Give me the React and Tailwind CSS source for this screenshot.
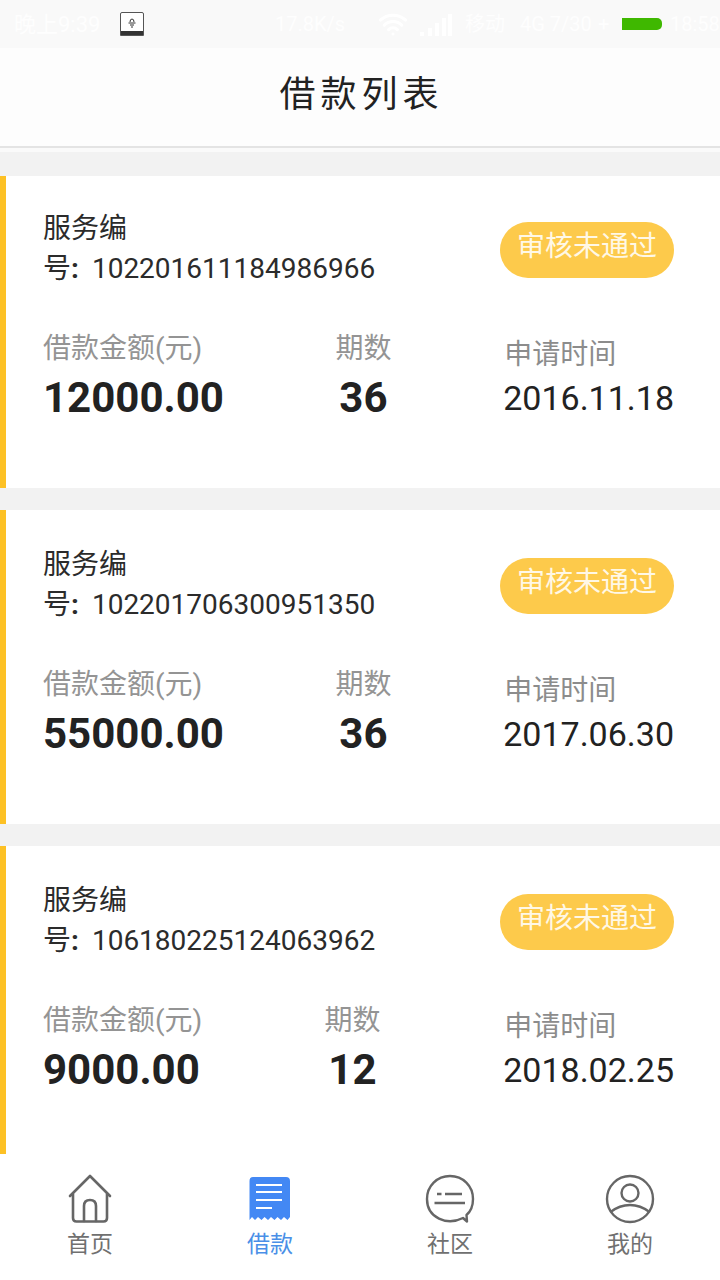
import React from 'react'
import { Wifi } from 'lucide-react'

const font = "font-['Roboto','Noto_Sans_CJK_SC',sans-serif]"

const loans = [
  { no: '102201611184986966', amount: '12000.00', term: '36', date: '2016.11.18', card: 'h-[312px] pt-[33px]', termLeft: 'ml-[41px]' },
  { no: '102201706300951350', amount: '55000.00', term: '36', date: '2017.06.30', card: 'h-[314px] pt-[35px]', termLeft: 'ml-[41px]' },
  { no: '106180225124063962', amount: '9000.00', term: '12', date: '2018.02.25', card: 'h-[308px] pt-[35px]', termLeft: 'ml-[30px]' },
]

const LoanCard = ({ loan }) => (
  <div className={`${loan.card} bg-white border-l-[6px] border-[#fdc125] pl-[37px] pr-[46px]`}>
    <div className='flex justify-between items-start'>
      <div className='text-[28px] leading-[40px] text-[#2b2b2b] w-[340px]'>
        <div>服务编</div>
        <div>号<span className='font-bold'>:</span><span className='ml-[13px]'>{loan.no}</span></div>
      </div>
      <div className='mt-[13px] w-[174px] h-[56px] rounded-full bg-[#fdca4b] text-[#fff8e6] text-[28px] leading-[49px] text-center'>审核未通过</div>
    </div>
    <div className='flex mt-[40px]'>
      <div className='w-[254px]'>
        <div className='text-[28px] leading-[40px] text-[#949494]'>借款金额(元)</div>
        <div className='text-[42px] leading-[58px] font-bold text-[#222222]'>{loan.amount}</div>
      </div>
      <div className='w-[207px] flex'>
        <div className={`${loan.termLeft} w-[54px] flex flex-col items-center`}>
          <div className='text-[28px] leading-[40px] text-[#949494] whitespace-nowrap'>期数</div>
          <div className='text-[42px] leading-[58px] font-bold text-[#222222]'>{loan.term}</div>
        </div>
      </div>
      <div className='ml-[3px]'>
        <div className='text-[28px] leading-[40px] text-[#8c8c8c] mt-[6px]'>申请时间</div>
        <div className='text-[34px] leading-[48px] text-[#222222] -ml-[1px] -mt-[1px]'>{loan.date}</div>
      </div>
    </div>
  </div>
)

const HomeIcon = () => (
  <svg width='44' height='50' viewBox='0 0 44 50' fill='none' stroke='#666666' strokeWidth='2.6' strokeLinejoin='round' strokeLinecap='round'>
    <path d='M2 22 L22 2 L42 22' />
    <path d='M5 20 V44 Q5 47.500 8.500 47.500 H35.500 Q39 47.500 39 44 V20' />
    <path d='M16 47 V32 Q16 26 22 26 Q28 26 28 32 V47' />
  </svg>
)

const LoanIcon = () => (
  <svg width='42' height='48' viewBox='0 0 42 48'>
    <path fill='#4388f4' d='M4 2 H37 Q41 2 41 6 V42 L38.500 45 L35 42 L32 45 L28.500 42 L25.500 45 L22 42 L19 45 L15.500 42 L12.500 45 L9 42 L6 45 L3 42 L0.500 45 V6 Q0.500 2 4 2 Z' />
    <path stroke='#ffffff' strokeWidth='2' d='M7 10 H33 M7 17 H33 M7 25 H33 M7 33 H23' />
  </svg>
)

const ChatIcon = () => (
  <svg width='50' height='50' viewBox='0 0 50 50' fill='none' stroke='#666666' strokeWidth='2.4' strokeLinecap='round' strokeLinejoin='round'>
    <path d='M38 44 C22 52 2 44 2 25 C2 12 12 2 25 2 C38 2 48 12 48 25 C48 33 45 38 41.500 41 L42 47.500 Z' />
    <path strokeLinecap='butt' d='M12 20 H16.500 M20 20 H37 M9.500 29 H40' />
  </svg>
)

const UserIcon = () => (
  <svg width='50' height='50' viewBox='0 0 50 50' fill='none' stroke='#666666' strokeWidth='2.4'>
    <circle cx='25' cy='25' r='23' />
    <circle cx='25' cy='19' r='8.500' />
    <path d='M5.500 38 C12 33 18 31 25 31 C32 31 38 33 44.500 38' />
  </svg>
)

const tabs = [
  { label: '首页', icon: <HomeIcon />, cls: 'text-[#707070]' },
  { label: '借款', icon: <LoanIcon />, cls: 'text-[#4a8fe7]' },
  { label: '社区', icon: <ChatIcon />, cls: 'text-[#707070]' },
  { label: '我的', icon: <UserIcon />, cls: 'text-[#707070]' },
]

const App = () => {
  return (
    <div className={`${font} w-[720px] h-[1280px] bg-[#f2f2f2] overflow-hidden flex flex-col`}>
      {/* status bar, mostly white on white */}
      <div className='h-[48px] bg-[#f9f9f9] flex items-center pl-[14px] text-[22px] text-[#fefefe] whitespace-nowrap'>
        <span className='w-[106px] shrink-0'>晚上9:39</span>
        <div className='w-[24px] h-[24px] shrink-0 border border-[#555555] rounded-t-[2px] bg-white flex flex-col items-center justify-end'>
          <svg width='10' height='10' viewBox='0 0 10 10' fill='none' stroke='#333333' strokeWidth='1'>
            <path d='M3 4 Q3 1 5 1 Q7 1 7 4 M1.500 5 H8.500 M3 7 H7 M4 9 H6' />
          </svg>
          <div className='w-full h-[4px] mt-[3px] bg-[#333333]' />
        </div>
        <span className='ml-[131px] w-[103px] shrink-0 text-[20px]'>17.8K/s</span>
        <Wifi className='shrink-0' size={30} strokeWidth={2.5} color='#ffffff' />
        <svg className='ml-[12px] shrink-0' width='32' height='24' viewBox='0 0 32 24' fill='#ffffff'>
          <path d='M0 20 H4 V24 H0 Z M8 16 H12 V24 H8 Z M15 11 H19 V24 H15 Z M22 6 H26 V24 H22 Z M28 2 H32 V24 H28 Z' />
        </svg>
        <span className='ml-[13px] w-[55px] shrink-0 text-[20px]'>移动</span>
        <span className='w-[78px] shrink-0 text-[20px]'>4G 7/30</span>
        <span className='w-[24px] shrink-0 text-[20px]'>+</span>
        <div className='w-[40px] h-[12px] shrink-0 bg-[#3fb800] rounded-r-[5px]' />
        <span className='ml-[8px] text-[20px]'>18:58</span>
      </div>

      <div className='h-[100px] pb-[12px] bg-[#fdfdfd] border-b-[2px] border-[#e4e4e4] flex items-center justify-center'>
        <span className="font-['Noto_Sans_CJK_SC',sans-serif] text-[36px] tracking-[5px] text-[#222222] ml-[3px]">借款列表</span>
      </div>
      <div className='h-[4px] bg-[#fafafa]' />

      <div className='flex-1 pt-[24px] flex flex-col gap-[22px]'>
        {loans.map((loan) => <LoanCard key={loan.no} loan={loan} />)}
      </div>

      <nav className='h-[126px] bg-white grid grid-cols-4'>
        {tabs.map((tab) => (
          <div key={tab.label} className={`${tab.cls} flex flex-col items-center pt-[20px]`}>
            <div className='h-[50px] flex items-center'>{tab.icon}</div>
            <span className='text-[23px] leading-[32px] mt-[5px]'>{tab.label}</span>
          </div>
        ))}
      </nav>
    </div>
  )
}

export default App
